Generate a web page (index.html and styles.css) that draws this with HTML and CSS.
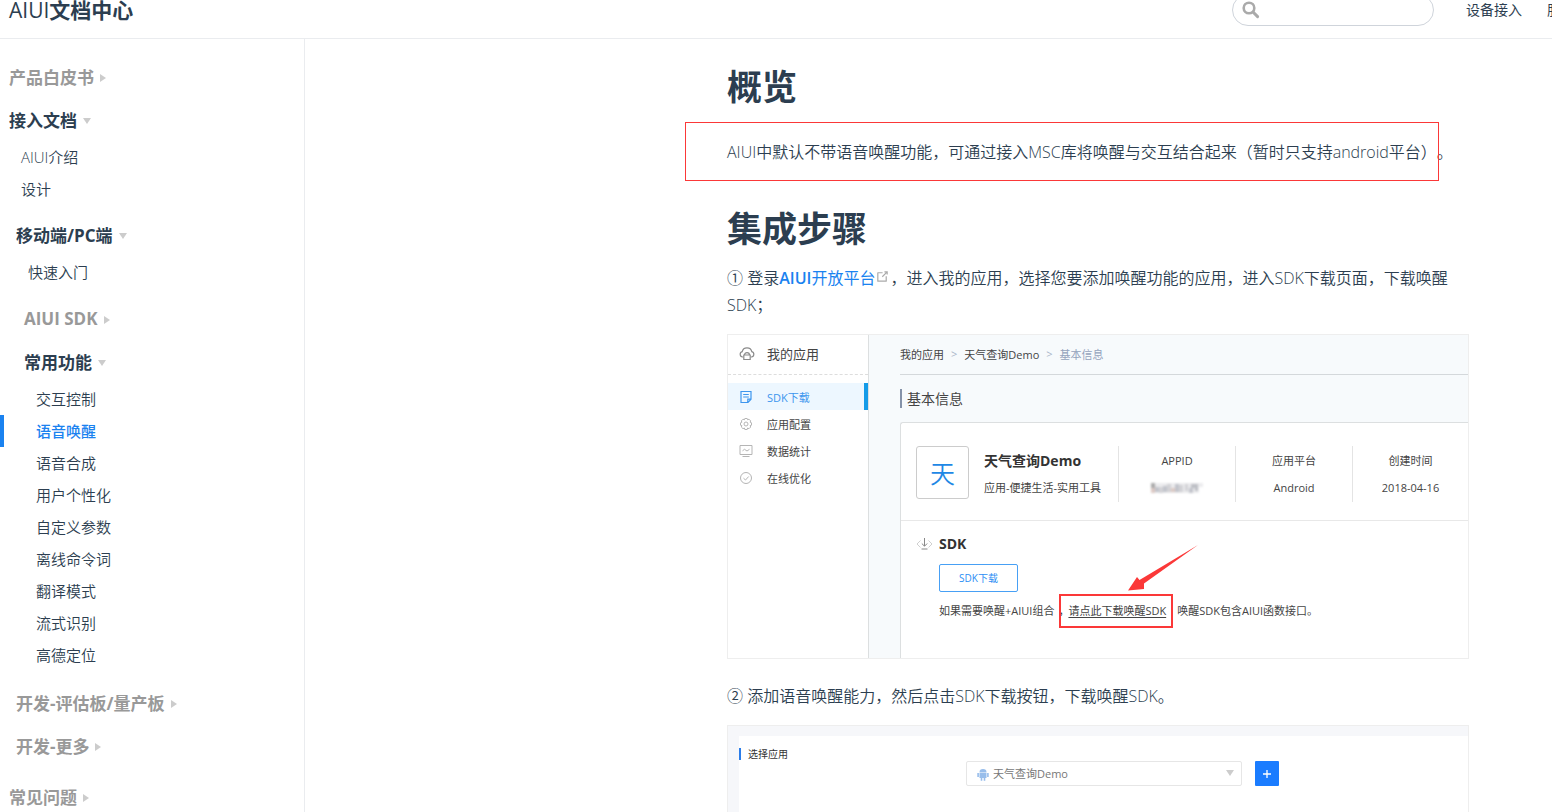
FILE: index.html
```
<!DOCTYPE html>
<html lang="zh-CN">
<head>
<meta charset="utf-8">
<title>AIUI文档中心</title>
<link rel="stylesheet" href="styles.css">
</head>
<body>
<div class="page">
  <header class="navbar">
    <a class="site-name" href="#"><span class="site-latin">AIUI</span>文档中心</a>
    <div class="search">
      <svg class="search-icon" viewBox="0 0 18 18" aria-hidden="true"><circle cx="7" cy="7" r="5.3" fill="none" stroke="#aaa" stroke-width="2.6"/><path d="M11 11l4.6 4.6" stroke="#aaa" stroke-width="3" stroke-linecap="round"/></svg>
      <input class="search-input" type="search" aria-label="搜索">
    </div>
    <nav class="nav-links"><a href="#">设备接入</a><a href="#">服务</a></nav>
  </header>

  <div class="body">
    <aside class="sidebar">
      <p class="heading muted">产品白皮书<i class="arrow right"></i></p>
      <p class="heading">接入文档<i class="arrow down"></i></p>
      <div class="group outer">
        <ul class="links">
          <li><a href="#">AIUI介绍</a></li>
          <li><a href="#">设计</a></li>
        </ul>
        <p class="heading level-1">移动端/PC端<i class="arrow down"></i></p>
        <div class="group inner">
          <ul class="links level-1">
            <li><a href="#">快速入门</a></li>
          </ul>
          <p class="heading level-2 muted">AIUI SDK<i class="arrow right"></i></p>
          <p class="heading level-2">常用功能<i class="arrow down"></i></p>
          <ul class="links level-2">
            <li><a href="#">交互控制</a></li>
            <li><a class="active" href="#">语音唤醒</a></li>
            <li><a href="#">语音合成</a></li>
            <li><a href="#">用户个性化</a></li>
            <li><a href="#">自定义参数</a></li>
            <li><a href="#">离线命令词</a></li>
            <li><a href="#">翻译模式</a></li>
            <li><a href="#">流式识别</a></li>
            <li><a href="#">高德定位</a></li>
          </ul>
        </div>
        <p class="heading level-1 muted">开发-评估板/量产板<i class="arrow right"></i></p>
        <p class="heading level-1 muted">开发-更多<i class="arrow right"></i></p>
      </div>
      <p class="heading muted">常见问题<i class="arrow right"></i></p>
    </aside>

    <main class="content">
      <h1>概览</h1>
      <p class="marked">AIUI中默认不带语音唤醒功能，可通过接入MSC库将唤醒与交互结合起来（暂时只支持android平台）。</p>
      <h1>集成步骤</h1>
      <p class="step">① 登录<a class="link" href="#"><b>AIUI</b>开放平台<svg class="outbound" viewBox="0 0 100 100" aria-hidden="true"><path fill="#aaa" d="M18.8,85.1h56c2.2,0,4-1.8,4-4v-32h-8v28h-48v-48h28v-8h-32c-2.2,0-4,1.8-4,4v56C14.8,83.3,16.6,85.1,18.8,85.1z"/><path fill="#aaa" d="M45.7,48.7L51.3,54.3 77.2,28.5 77.2,37.2 85.2,37.2 85.2,14.9 62.8,14.9 62.8,22.9 71.5,22.9z"/></svg></a>，进入我的应用，选择您要添加唤醒功能的应用，进入SDK下载页面，下载唤醒SDK；</p>

      <section class="shot console">
        <div class="c-side">
          <div class="c-head">
            <svg class="c-icon large" viewBox="0 0 16 16" fill="none" stroke="#8b8b8b" stroke-width="1.2"><path d="M4.200 11H3.600a2.700 2.700 0 0 1-.4-5.300C3.700 3.200 5.600 1.800 8 1.800s4.300 1.400 4.800 3.900a2.700 2.700 0 0 1-.4 5.300h-.6"/><path d="M4.800 9h6.400v4.500H4.800zM5.500 9c0-3.200 5-3.200 5 0"/></svg>
            <span>我的应用</span>
          </div>
          <ul class="c-menu">
            <li class="on"><svg class="c-icon" viewBox="0 0 14 14" fill="none" stroke="#3d96ee" stroke-width="1.200"><path d="M2 1.500h10v7.800L9 12.500H2zM4.200 4.500h5.600M4.200 7h5.600M8.800 12.300V9.200H12"/></svg><span>SDK下载</span></li>
            <li><svg class="c-icon" viewBox="0 0 14 14" fill="none" stroke="#b5b5b5"><path d="M5.800 1.500h2.400l.4 1.300 1.400-.6 1.700 1.700-.6 1.300 1.400.6v2.400l-1.400.4.6 1.400-1.700 1.700-1.400-.7-.4 1.500H5.800l-.4-1.500-1.400.7L2.300 10l.6-1.400-1.400-.4V5.800l1.400-.6-.6-1.300L4 2.200l1.400.6z"/><circle cx="7" cy="7" r="2"/></svg><span>应用配置</span></li>
            <li><svg class="c-icon" viewBox="0 0 14 14" fill="none" stroke="#b5b5b5"><path d="M1 1.500h12v9H1zM3.500 12.500h7M3.500 6.800l2-1.500 2.500 1.700 2.500-1.700"/></svg><span>数据统计</span></li>
            <li><svg class="c-icon" viewBox="0 0 14 14" fill="none" stroke="#b5b5b5"><circle cx="7" cy="7" r="5.500"/><path d="M4.500 7.200l2 1.800 3.200-3.500"/></svg><span>在线优化</span></li>
          </ul>
        </div>
        <div class="c-main">
          <div class="crumbs"><span>我的应用</span><i>&gt;</i><span>天气查询Demo</span><i>&gt;</i><span class="current">基本信息</span></div>
          <h2 class="c-title">基本信息</h2>
          <div class="card">
            <div class="app">
              <div class="tile">天</div>
              <div class="app-name"><strong>天气查询Demo</strong><span>应用-便捷生活-实用工具</span></div>
              <div class="cell"><span>APPID</span><svg class="mosaic" viewBox="0 0 52 11" aria-hidden="true"><path fill="#ececee" d="M0 0h52v10H0z"/><path fill="#aaa" d="M0 0h4v5H0z"/><path fill="#dcc9c4" d="M0 5h4v5H0zM20 5h4v4h-4z"/><path fill="#c2c4cb" d="M4 4h4v5H4zM12 3h4v6h-4zM24 1h4v8h-4zM38 5h4v5h-4z"/><path fill="#d2d2d6" d="M8 4h4v6H8zM16 1h4v8h-4zM28 2h4v7h-4zM34 1h3v7h-3z"/><path fill="#bdbfc5" d="M40 1h7v4h-7zM44 4h3v4h-3z"/><path fill="#fff" d="M48 4h4v7h-4z"/></svg></div>
              <div class="cell"><span>应用平台</span><span>Android</span></div>
              <div class="cell"><span>创建时间</span><span>2018-04-16</span></div>
            </div>
            <div class="sdk">
              <svg class="sdk-icon" viewBox="0 0 17 14" fill="none"><path stroke="#d0d0d0" d="M4.500 3.500L1 7l3.500 3.500M12.500 3.500L16 7l-3.500 3.500"/><path stroke="#888" d="M8.500 1v8M5.800 6.500l2.700 2.700 2.700-2.700M5.500 12h6"/></svg>
              <div class="sdk-body">
                <h3>SDK</h3>
                <button class="outline" type="button">SDK下载</button>
                <p class="note">如果需要唤醒+AIUI组合<span class="comma">，</span><span class="target"><a href="#">请点此下载唤醒SDK</a><svg class="pointer" viewBox="0 0 72 48" aria-hidden="true"><path fill="#fb3838" d="M71 0L17 38.500 17 44 1 45.500 10 32 12.500 35z"/></svg></span>唤醒SDK包含AIUI函数接口。</p>
              </div>
            </div>
          </div>
        </div>
      </section>

      <p class="step">② 添加语音唤醒能力，然后点击SDK下载按钮，下载唤醒SDK。</p>

      <section class="shot chooser">
        <div class="panel">
          <label class="panel-title" for="app">选择应用</label>
          <div class="picker">
            <div class="select-box">
              <svg class="android" viewBox="0 0 12 13" fill="#97bdeb" aria-hidden="true"><path d="M2.500 4.200a3.500 3.300 0 0 1 7 0zM2.500 4.700h7v5.300h-7zM.3 5h1.600v4H.3zM10.100 5h1.600v4h-1.600zM3.700 10h1.600v2.800H3.700zM6.700 10h1.600v2.800H6.700z"/></svg>
              <select id="app"><option>天气查询Demo</option></select>
              <i class="arrow down caret"></i>
            </div>
            <button class="add" type="button" aria-label="添加"><svg viewBox="0 0 10 10" aria-hidden="true"><path stroke="#fff" stroke-width="1.300" d="M5 1v8M1 5h8"/></svg></button>
          </div>
        </div>
      </section>
    </main>
  </div>
</div>
</body>
</html>
```
FILE: styles.css
```
* { box-sizing: border-box; }
body, p, h1, h2, h3, ul { margin: 0; padding: 0; }
ul { list-style: none; }
a { color: inherit; text-decoration: none; }
i { font-style: normal; }
body {
  font-family: "Open Sans", "Noto Sans CJK SC", sans-serif;
  font-size: 16px;
  font-weight: 350;
  color: #2c3e50;
  background: #fff;
  text-spacing-trim: space-all;
}
button, input, select { font-family: inherit; }

.page { height: 100vh; overflow: hidden; display: flex; flex-direction: column; }

/* top bar, scrolled partly out of view */
.navbar {
  flex: none;
  height: 58px;
  margin-top: -19px;
  padding-left: 9px;
  display: flex;
  align-items: center;
  border-bottom: 1px solid #eaecef;
}
.site-name { padding-bottom: 2px; font-size: 21px; font-weight: 700; }
.site-latin { font-weight: 400; }
.search { position: relative; margin-left: auto; margin-right: 32px; }
.search-icon { position: absolute; left: 10px; top: 7px; width: 18px; height: 18px; }
.search-input {
  display: block;
  width: 202px;
  height: 32px;
  padding: 0 8px 0 32px;
  border: 1px solid #cfd4db;
  border-radius: 32px;
  background: #fff;
  outline: none;
  appearance: none;
}
.nav-links {
  flex: 0 0 86px;
  display: flex;
  gap: 25px;
  padding-bottom: 2px;
  overflow: hidden;
  white-space: nowrap;
  font-size: 14px;
  font-weight: 400;
}

.body { flex: 1; display: flex; min-height: 0; }

.sidebar { flex: 0 0 305px; padding-top: 9px; border-right: 1px solid #eaecef; overflow: hidden; }
.heading {
  display: flex;
  align-items: center;
  height: 28px;
  margin-top: 15px;
  padding-left: 9px;
  padding-bottom: 2px;
  font-size: 17px;
  font-weight: 700;
}
.heading.muted { color: #999; }
.heading.level-1 { padding-left: 16px; }
.heading.level-2 { padding-left: 24px; }
.arrow { width: 0; height: 0; margin-left: 6px; margin-top: 3px; border: 4px solid transparent; }
.arrow.right { border-left: 6px solid #ccc; border-right: 0; }
.arrow.down { border-top: 6px solid #ccc; border-bottom: 0; }
.group.outer { padding-bottom: 8px; }
.group.inner { padding-bottom: 2px; }
.links { padding: 7px 0 1px; font-size: 15px; }
.links a { display: block; line-height: 32px; padding-left: 17px; border-left: 4px solid transparent; }
.links.level-1 { padding-bottom: 2px; }
.links.level-1 a { padding-left: 24px; }
.links.level-2 a { padding-left: 32px; }
.links a.active { color: #1a82f0; border-left-color: #1a82f0; font-weight: 500; }

.content { flex: 0 1 742px; margin-left: auto; margin-right: 83px; padding-top: 26px; }
.content h1 { font-size: 35px; line-height: 44px; }
.content > p { line-height: 27px; }
.marked { position: relative; margin: 30px -8px 41px 0; white-space: nowrap; }
.marked::after {
  content: "";
  position: absolute;
  left: -42px;
  top: -17px;
  right: 38px;
  bottom: -15px;
  border: 1px solid #fb3838;
}
.step { margin: 14px 0 15px; }
.link { color: #1a82f0; font-weight: 400; }
.link b { font-weight: 600; }
.outbound { width: 15px; height: 15px; }

.shot { border: 1px solid #eee; }

/* console illustration */
.console { display: flex; height: 325px; margin-bottom: 24px; overflow: hidden; font-size: 11px; font-weight: 400; color: #444; }
.c-side { flex: 0 0 141px; border-right: 1px solid #dcdfe0; }
.c-head { display: flex; align-items: center; gap: 12px; height: 40px; padding: 0 0 2px 11px; border-bottom: 1px dashed #ddd; font-size: 13px; }
.c-icon { flex: none; width: 14px; height: 14px; }
.c-icon.large { width: 16px; height: 16px; }
.c-menu { padding-top: 8px; }
.c-menu li { display: flex; align-items: center; gap: 14px; height: 27px; padding-left: 11px; }
.c-menu .on { color: #3d96ee; background: #edf7ff; border-right: 4px solid #149be8; }
.c-main { flex: 1; min-width: 0; padding-left: 31px; background: #f7fafc; display: flex; flex-direction: column; }
.crumbs { display: flex; align-items: center; gap: 7px; height: 40px; padding-bottom: 2px; border-bottom: 1px solid #d4d8db; }
.crumbs i { color: #a9b5c8; }
.crumbs .current { color: #94a3bd; }
.c-title { margin: 14px 0; padding-left: 5px; border-left: 2px solid #8492a9; font-size: 14px; font-weight: 400; line-height: 19px; }
.card { flex: 1; border: 1px solid #dcdfe0; border-right: 0; border-bottom: 0; border-radius: 3px 0 0 0; background: #fff; }
.app { display: flex; height: 98px; padding: 23px 0 18px 15px; border-bottom: 1px solid #e8e8e8; }
.tile { width: 53px; height: 53px; border: 1px solid #ccc; border-radius: 3px; color: #1e88e5; font-size: 25px; font-weight: 350; line-height: 52px; text-align: center; }
.app-name { flex: 1; display: flex; flex-direction: column; padding: 1px 0 0 15px; white-space: nowrap; line-height: 27px; }
.app-name strong { font-size: 14px; color: #333; }
.cell { flex: 0 0 117px; display: flex; flex-direction: column; align-items: center; padding-top: 1px; line-height: 27px; border-left: 1px solid #e4e4e4; }
.cell:last-child { flex-basis: 116px; }
.mosaic { width: 52px; height: 11px; margin-top: 9px; filter: blur(1px); }
.sdk { display: flex; padding: 12px 0 0 15px; gap: 6px; }
.sdk-icon { width: 17px; height: 14px; margin-top: 4px; }
.sdk h3 { font-size: 14px; line-height: 22px; color: #333; }
.outline { display: block; width: 79px; height: 28px; margin: 9px 0 8px; padding: 0 0 2px; border: 1px solid #47a0f5; border-radius: 2px; background: #fff; color: #2c8ef4; font-size: 10px; }
.note { line-height: 22px; white-space: nowrap; }
.comma { margin: 0 -1px 0 4px; }
.target { position: relative; margin-right: 11px; }
.target a { text-decoration: underline; text-underline-offset: 2px; }
.target::after { content: ""; position: absolute; left: -9px; right: -7px; top: -9px; bottom: -10px; border: 2px solid #fb3838; }
.pointer { position: absolute; left: 59px; bottom: 25px; width: 72px; height: 48px; }

/* application chooser */
.chooser { padding: 10px 0 0 11px; background: #f6f7fa; }
.panel { height: 160px; padding-top: 12px; background: #fff; }
.panel-title { display: block; padding-left: 7px; border-left: 2px solid #2b7de9; color: #333; font-size: 10px; font-weight: 400; line-height: 12px; }
.picker { display: flex; gap: 13px; padding-left: 227px; margin-top: 1px; }
.select-box { position: relative; flex: 0 1 276px; }
.select-box select { display: block; width: 100%; height: 25px; padding: 0 24px 0 26px; border: 1px solid #e6e6e6; border-radius: 2px; background: #fff; color: #777; font-size: 11px; appearance: none; }
.android { position: absolute; left: 11px; top: 7px; width: 12px; height: 13px; }
.caret { position: absolute; right: 8px; top: 6px; pointer-events: none; }
.add { width: 24px; height: 25px; padding: 0; border: 0; border-radius: 1px; background: #1a7cff; display: grid; place-items: center; }
.add svg { width: 10px; height: 10px; }
```
